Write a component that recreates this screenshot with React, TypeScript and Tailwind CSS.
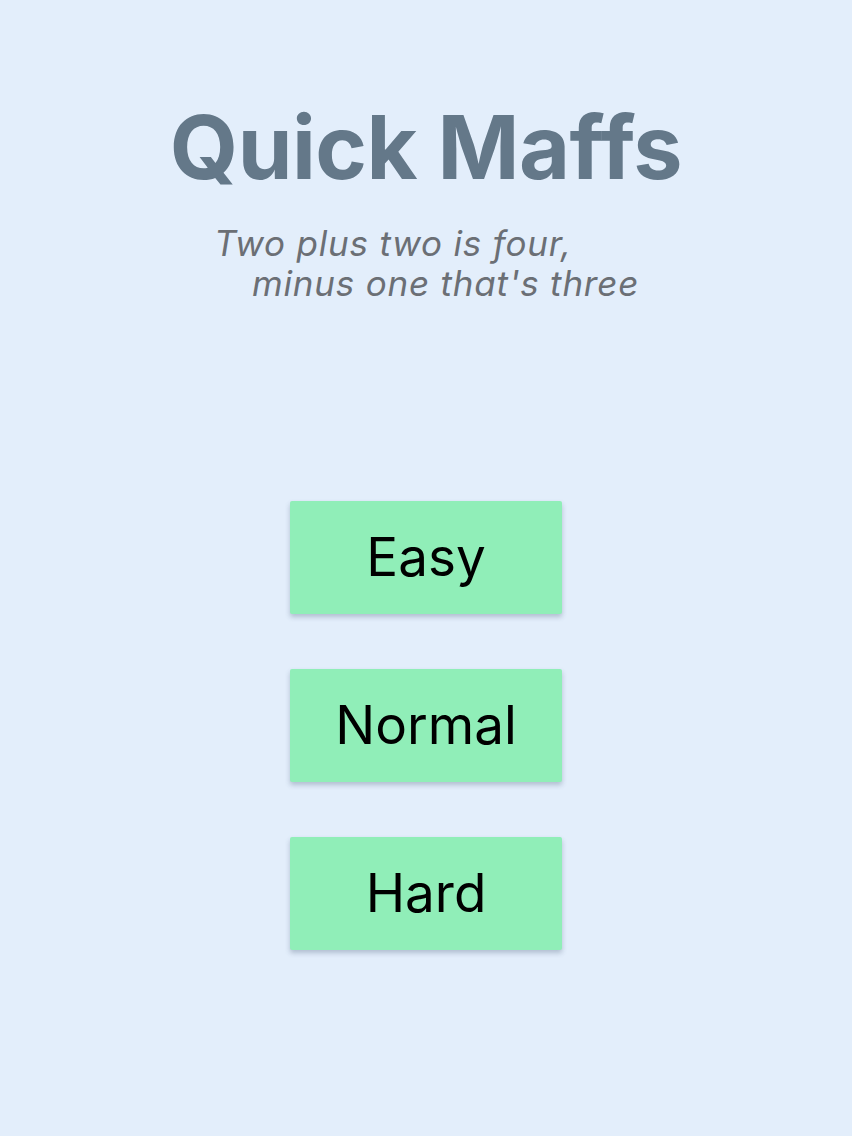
const levels = ["Easy", "Normal", "Hard"];

export default function App() {
  return (
    <div className="flex min-h-screen flex-col items-center bg-[#e3eefb] font-['Inter',sans-serif]">
      {/* Header */}
      <h1 className="mt-[103px] text-[88px] font-bold leading-none tracking-[-0.5px] text-[#647889]">
        Quick Maffs
      </h1>
      <div className="mt-[32px] w-[440px] pl-[8px] text-[35px] italic leading-[40px] tracking-[0.8px] text-[#6b6f75]">
        <p>Two plus two is four,</p>
        <p className="pl-[38px]">minus one that's three</p>
      </div>

      {/* Levels */}
      <div className="mt-[198px] flex flex-col gap-[55px]">
        {levels.map((level) => (
          <button
            key={level}
            className="flex h-[113px] w-[272px] items-center justify-center rounded-[2px] bg-[#90eeb8] text-[53px] text-black shadow-[0_3px_5px_rgba(60,80,110,0.3)]"
          >
            {level}
          </button>
        ))}
      </div>
    </div>
  );
}
